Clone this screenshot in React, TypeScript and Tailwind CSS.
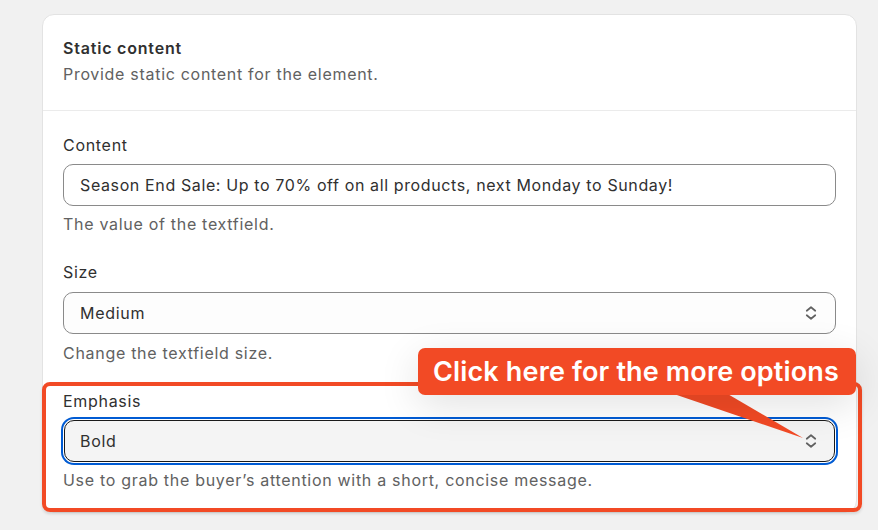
import React from "react";

const Chevrons = () => (
  <svg width="20" height="20" viewBox="0 0 20 20" fill="none">
    <path d="M5.75 7.75L10 4.25L14.25 7.75" stroke="#616161" strokeWidth="1.7" strokeLinecap="round" strokeLinejoin="round" />
    <path d="M5.75 12.25L10 15.75L14.25 12.25" stroke="#616161" strokeWidth="1.7" strokeLinecap="round" strokeLinejoin="round" />
  </svg>
);

export default function App() {
  return (
    <div
      className="min-h-[530px] w-full bg-[#f1f1f1] pl-[42px] pt-[14px] text-[#303030]"
      style={{ fontFamily: "Inter, 'Noto Sans', sans-serif" }}
    >
      <div className="relative w-[815px] rounded-[12px] border border-[#e3e3e3] bg-white tracking-[0.7px]">
        {/* header */}
        <div className="border-b border-[#ebebeb] px-5 pb-[24px] pt-[21px]">
          <div className="text-[16px] font-semibold leading-6 tracking-[0.8px]">Static content</div>
          <div className="mt-[2px] text-[16px] leading-6 text-[#616161]">Provide static content for the element.</div>
        </div>
        {/* body */}
        <div className="flex flex-col px-5 pb-[20px] pt-[22px]">
          <div className="text-[16px] leading-6">Content</div>
          <div className="mt-[7px] flex h-[42px] items-center rounded-[10px] border border-[#8a8a8a] bg-white px-4 text-[16px] tracking-[0.62px]">
            Season End Sale: Up to 70% off on all products, next Monday to Sunday!
          </div>
          <div className="mt-[6px] text-[16px] leading-6 text-[#616161]">The value of the textfield.</div>

          <div className="mt-[24px] text-[16px] leading-6">Size</div>
          <div className="mt-[8px] flex h-[42px] items-center justify-between rounded-[10px] border border-[#8a8a8a] bg-[#fdfdfd] pl-4 pr-[14px] text-[16px]">
            <span>Medium</span>
            <Chevrons />
          </div>
          <div className="mt-[7px] text-[16px] leading-6 text-[#616161]">Change the textfield size.</div>

          <div className="mt-[24px] text-[16px] leading-6">Emphasis</div>
          <div className="mx-[1px] mt-[7px] flex h-[42px] items-center justify-between rounded-[10px] border border-[#1a1a1a] bg-[#f4f4f4] pl-[15px] pr-[13px] text-[16px] ring-2 ring-[#005bd3] ring-offset-1 ring-offset-white">
            <span>Bold</span>
            <Chevrons />
          </div>
          <div className="mt-[6px] text-[16px] leading-6 text-[#616161]">Use to grab the buyer’s attention with a short, concise message.</div>
        </div>

        {/* red highlight box */}
        <div className="pointer-events-none absolute left-[-1px] top-[367px] h-[130px] w-[820px] rounded-[8px] border-[4px] border-[#f24a25] shadow-[0_2px_3px_rgba(0,0,0,0.12)]" />

        {/* callout tail */}
        <svg className="absolute left-[600px] top-[370px]" width="170" height="60" viewBox="0 0 170 60">
          <polygon points="28,8 83,8 160,53" fill="#f24a25" />
        </svg>

        {/* callout */}
        <div className="absolute left-[375px] top-[333px] flex h-[47px] w-[438px] items-center rounded-[7px] bg-[#f24a25] pl-[15px] text-[27px] font-semibold leading-none tracking-[0.15px] text-white shadow-[0_10px_40px_rgba(0,0,0,0.12)]">
          Click here for the more options
        </div>
      </div>
    </div>
  );
}
